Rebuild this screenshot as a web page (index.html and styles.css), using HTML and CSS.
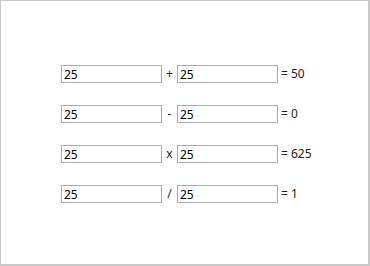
FILE: index.html
```html
<!DOCTYPE html>
<html>
<head>
<meta charset="utf-8">
<link rel="stylesheet" href="styles.css">
</head>
<body>
<div class="frame">
  <div class="calc">
    <div class="row">
      <input class="num" type="text" value="25">
      <span class="op">+</span>
      <input class="num" type="text" value="25">
      <span class="res">= 50</span>
    </div>
    <div class="row">
      <input class="num" type="text" value="25">
      <span class="op">-</span>
      <input class="num" type="text" value="25">
      <span class="res">= 0</span>
    </div>
    <div class="row">
      <input class="num" type="text" value="25">
      <span class="op">x</span>
      <input class="num" type="text" value="25">
      <span class="res">= 625</span>
    </div>
    <div class="row">
      <input class="num" type="text" value="25">
      <span class="op">/</span>
      <input class="num" type="text" value="25">
      <span class="res">= 1</span>
    </div>
  </div>
</div>
</body>
</html>
```
FILE: styles.css
```css
html, body {
  margin: 0;
  padding: 0;
  background: #ffffff;
}
.frame {
  box-sizing: border-box;
  width: 370px;
  height: 266px;
  border: 1px solid #c9c9c9;
  border-right-width: 2px;
  border-bottom-width: 2px;
  background: #ffffff;
  padding: 64px 0 0 60px;
  font-family: "Noto Sans", "DejaVu Sans", sans-serif;
  font-size: 12px;
  color: #222;
}
.calc {
  display: flex;
  flex-direction: column;
  gap: 22px;
}
.row {
  display: flex;
  align-items: center;
  height: 18px;
}
.num {
  box-sizing: border-box;
  width: 101px;
  height: 18px;
  margin: 0;
  border: 1px solid #ababab;
  border-radius: 0;
  padding: 0 2px;
  font-family: inherit;
  font-size: 12px;
  color: #000;
  background: #fff;
  outline: none;
}
.op {
  width: 15px;
  text-align: center;
  line-height: 18px;
}
.res {
  margin-left: 3px;
  line-height: 18px;
}
```
